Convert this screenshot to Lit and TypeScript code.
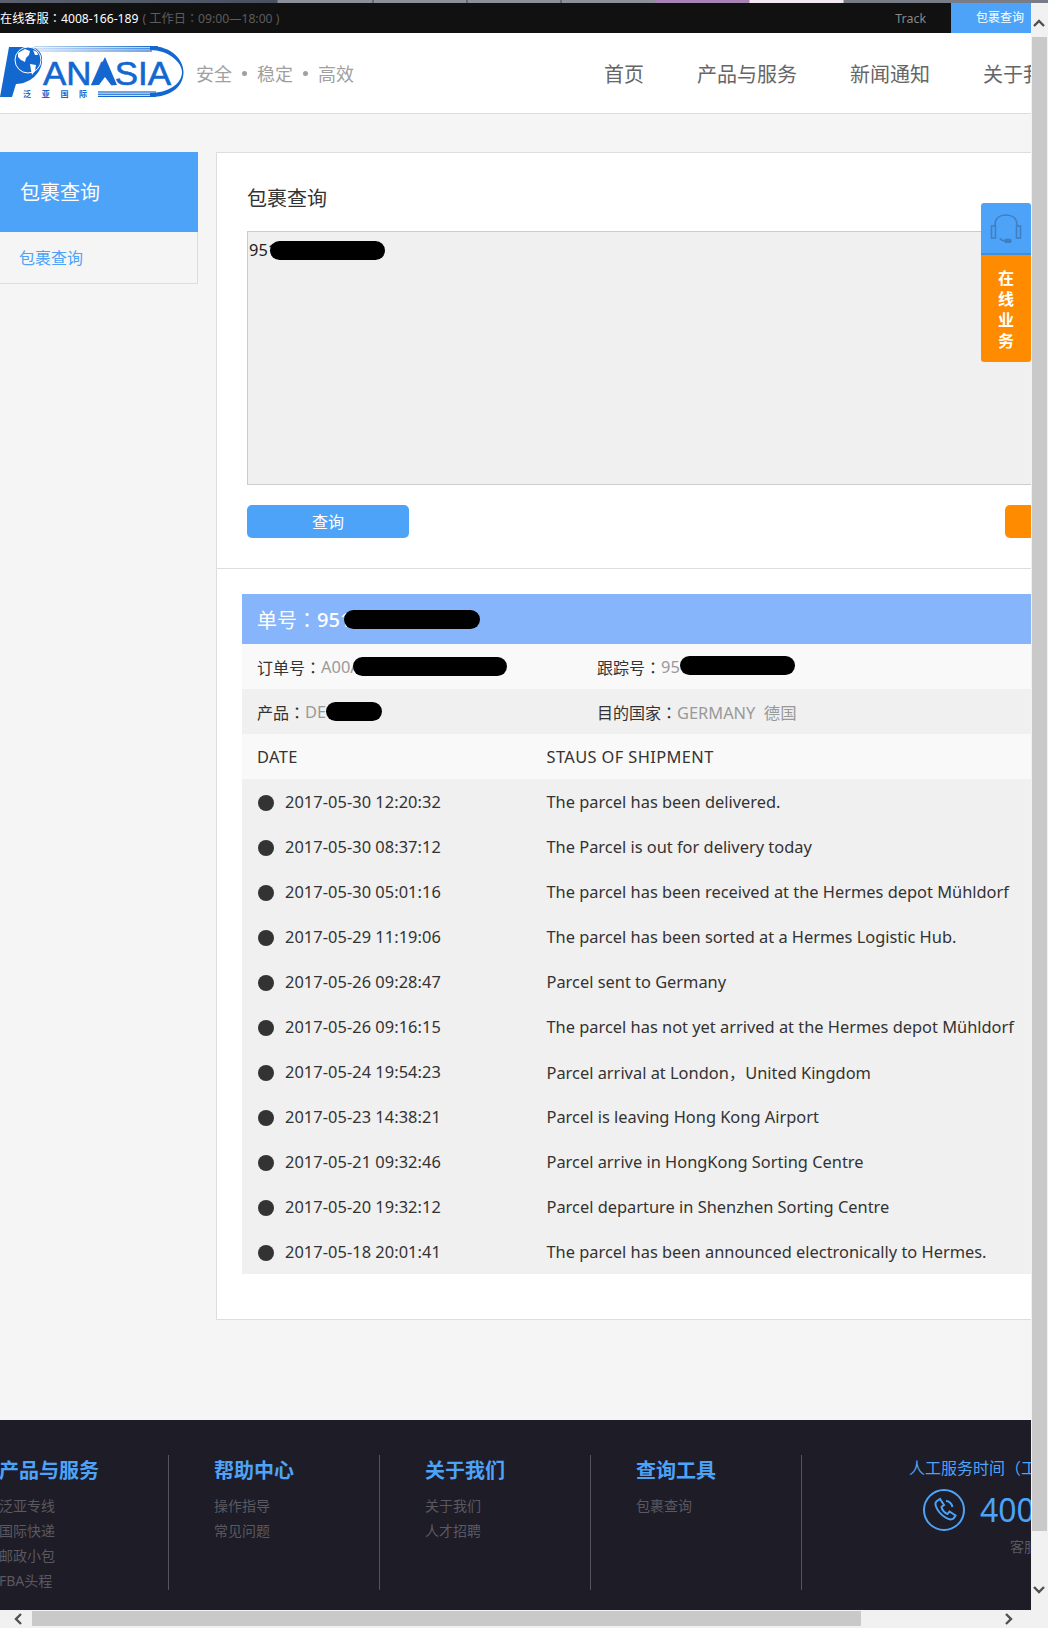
import { LitElement, html, css, svg } from "lit";
import { customElement } from "lit/decorators.js";

const ROWS: [string, string][] = [
  ["2017-05-30 12:20:32", "The parcel has been delivered."],
  ["2017-05-30 08:37:12", "The Parcel is out for delivery today"],
  ["2017-05-30 05:01:16", "The parcel has been received at the Hermes depot Mühldorf"],
  ["2017-05-29 11:19:06", "The parcel has been sorted at a Hermes Logistic Hub."],
  ["2017-05-26 09:28:47", "Parcel sent to Germany"],
  ["2017-05-26 09:16:15", "The parcel has not yet arrived at the Hermes depot Mühldorf"],
  ["2017-05-24 19:54:23", "Parcel arrival at London，United Kingdom"],
  ["2017-05-23 14:38:21", "Parcel is leaving Hong Kong Airport"],
  ["2017-05-21 09:32:46", "Parcel arrive in HongKong Sorting Centre"],
  ["2017-05-20 19:32:12", "Parcel departure in Shenzhen Sorting Centre"],
  ["2017-05-18 20:01:41", "The parcel has been announced electronically to Hermes."],
];

const FOOT: [string, string[]][] = [
  ["产品与服务", ["泛亚专线", "国际快递", "邮政小包", "FBA头程"]],
  ["帮助中心", ["操作指导", "常见问题"]],
  ["关于我们", ["关于我们", "人才招聘"]],
  ["查询工具", ["包裹查询"]],
];

const C = html`<span class="c">：</span>`;

@customElement("app-root")
export class AppRoot extends LitElement {
  static styles = css`
    :host {
      display: block;
      width: 1048px;
      height: 1628px;
      overflow: hidden;
      font-family: "Noto Sans", "Noto Sans CJK SC", sans-serif;
      color: #333;
    }
    .c { font-family: "Noto Sans CJK TC", sans-serif; }
    .chrome {
      height: 3px;
      background: linear-gradient(
        90deg,
        #5a606c 0,
        #4a5262 277px,
        #8d9098 278px,
        #8d9098 372px,
        #444 373px,
        #8d9098 374px,
        #8d9098 466px,
        #444 467px,
        #8d9098 468px,
        #8d9098 560px,
        #444 561px,
        #8d9098 562px,
        #8d9098 655px,
        #a884b4 656px,
        #a884b4 749px,
        #f4e8f2 750px,
        #f4e8f2 843px,
        #777c86 844px,
        #777c86 1048px
      );
    }
    .frame {
      display: grid;
      grid-template-columns: 1031px 17px;
      grid-template-rows: 1607px 18px;
      height: 1625px;
    }
    .view {
      position: relative;
      overflow: hidden;
      background: #f5f5f5;
    }
    .page {
      width: 1400px;
    }
    .topbar {
      height: 30px;
      width: 1031px;
      background: #111;
      display: flex;
      align-items: center;
      font-size: 12.2px;
      white-space: nowrap;
    }
    .tel { color: #fff; }
    .hours { color: #5c5c5c; margin-left: 4px; }
    .track { margin-left: auto; color: #888; margin-right: 25px; font-size: 12.4px; }
    .tbtn {
      width: 80px;
      height: 30px;
      box-sizing: border-box;
      padding-left: 25px;
      line-height: 30px;
      font-size: 12px;
      background: #4da3f8;
      color: #fff;
      overflow: hidden;
    }
    .header {
      height: 80px;
      width: 1031px;
      background: #fff;
      border-bottom: 1px solid #ddd;
      display: flex;
      align-items: center;
      overflow: hidden;
    }
    .logo { flex: none; display: block; }
    .slogan {
      margin-left: 10px;
      font-size: 18px;
      color: #a0a0a0;
      white-space: nowrap;
      font-family: "Noto Sans CJK SC", serif;
      width: 170px;
      flex: none;
      display: flex;
      align-items: center;
      gap: 9px;
    }
    .slogan i {
      width: 5px;
      height: 5px;
      border-radius: 50%;
      background: #a0a0a0;
      margin: 0 1px;
    }
    .nav {
      display: flex;
      gap: 53px;
      margin-left: 238px;
      font-size: 20px;
      color: #666;
      white-space: nowrap;
      flex: none;
    }
    .body {
      display: flex;
      align-items: flex-start;
      padding-top: 38px;
      height: 1306px;
      box-sizing: border-box;
    }
    .side {
      width: 198px;
      flex: none;
      margin-right: 18px;
    }
    .side h2 {
      margin: 0;
      height: 80px;
      line-height: 82px;
      background: #4da3f8;
      color: #fff;
      font-size: 20px;
      font-weight: 400;
      padding-left: 20px;
    }
    .side a {
      display: block;
      height: 52px;
      line-height: 52px;
      box-sizing: border-box;
      padding-left: 19px;
      font-size: 16px;
      color: #4da3f8;
      border-right: 1px solid #ddd;
      border-bottom: 1px solid #ddd;
    }
    .panel {
      width: 1000px;
      flex: none;
      background: #fff;
      border: 1px solid #ddd;
      box-sizing: border-box;
      height: 1168px;
    }
    .query {
      height: 416px;
      border-bottom: 1px solid #ddd;
      padding: 29px 48px 0 30px;
      box-sizing: border-box;
    }
    .query h3 {
      margin: 0 0 16px;
      font-size: 20px;
      font-weight: 400;
      line-height: 33px;
      color: #333;
    }
    .ta {
      height: 254px;
      border: 1px solid #ccc;
      background: #f0f0f0;
      box-sizing: border-box;
      padding: 7px 1px;
      font-size: 16.4px;
      line-height: 22px;
      color: #222;
      display: flex;
      align-items: flex-start;
    }
    .pill {
      display: inline-block;
      background: #000;
      border-radius: 10px;
      height: 19px;
      flex: none;
    }
    .ta .pill { width: 115px; margin-left: -7px; margin-top: 2px; }
    .btns {
      display: flex;
      justify-content: space-between;
      margin-top: 20px;
    }
    .btn {
      height: 33px;
      width: 162px;
      line-height: 35px;
      text-align: center;
      border-radius: 5px;
      background: #4da3f8;
      color: #fff;
      font-size: 16px;
    }
    .btn.orange { background: #ff8c00; }
    .result {
      margin: 25px 0 0 25px;
      width: 960px;
    }
    .rhead {
      height: 50px;
      background: #87b5fb;
      color: #fff;
      font-size: 20px;
      display: flex;
      align-items: center;
      padding-left: 15px;
      white-space: nowrap;
    }
    .rhead .num { font-weight: 500; }
    .rhead .pill { width: 136px; margin-left: -7px; }
    .info {
      display: grid;
      grid-template-columns: 340px 1fr;
      height: 45px;
      align-items: center;
      padding-left: 15px;
      font-size: 16px;
      background: #f9f9f9;
      white-space: nowrap;
    }
    .info.alt { background: #f0f0f0; }
    .info > div { display: flex; align-items: center; }
    .muted { color: #999; font-size: 16.4px; }
    .pill.order { width: 154px; margin-left: -8px; }
    .pill.track-no { width: 115px; margin-top: -2px; }
    .pill.product { width: 56px; }
    .row {
      display: grid;
      grid-template-columns: 289.500px 1fr;
      height: 45px;
      align-items: center;
      padding-left: 15px;
      font-size: 16.4px;
      background: #f0f0f0;
      white-space: nowrap;
    }
    .row.head { background: #f9f9f9; letter-spacing: 0.4px; }
    .date { display: flex; align-items: center; letter-spacing: 0.05px; }
    .dot {
      width: 16px;
      height: 16px;
      border-radius: 50%;
      background: #333;
      margin: 2px 11px 0 1px;
      flex: none;
    }
    .footer {
      height: 190px;
      background: #1d1c27;
      display: flex;
      padding-top: 35px;
      box-sizing: border-box;
      width: 1400px;
    }
    .fcol {
      width: 211px;
      height: 135px;
      box-sizing: border-box;
      border-right: 1px solid #55545c;
      padding-left: 45px;
      flex: none;
    }
    .fcol:first-child { width: 169px; padding-left: 0; }
    .fcol h4 {
      margin: 0 0 6px;
      font-size: 20px;
      font-weight: 700;
      color: #4da3f8;
      line-height: 32px;
    }
    .fcol a {
      display: block;
      font-size: 14px;
      line-height: 25px;
      color: #5a5961;
      white-space: nowrap;
    }
    .fcol:first-child a, .fcol:first-child h4 { margin-left: -1px; }
    .contact { padding-left: 107px; white-space: nowrap; }
    .contact .hours2 { font-size: 16px; color: #4da3f8; line-height: 24px; margin-top: 1px; }
    .tel2 { display: flex; align-items: center; margin: 8px 0 0 13px; gap: 14px; color: #4da3f8; font-size: 32px; line-height: 44px; }
    .kefu { font-size: 14px; color: #5a5961; margin: 4px 0 0 101px; }
    .float {
      position: absolute;
      right: 0;
      top: 200px;
      width: 50px;
      border-radius: 3px;
      overflow: hidden;
    }
    .fb {
      height: 50px;
      background: #4da3f8;
      border-bottom: 2px solid #3f8fdd;
      display: flex;
      align-items: center;
      justify-content: center;
    }
    .fo {
      height: 107px;
      background: #ff8c00;
      color: #fff;
      font-size: 16px;
      font-weight: 700;
      line-height: 21px;
      text-align: center;
      box-sizing: border-box;
      padding-top: 13px;
    }
    .vbar, .hbar { background: #f1f1f1; position: relative; }
    .vbar { grid-row: 1 / span 2; grid-column: 2; }
    .vbar .thumb {
      position: absolute;
      left: 1px;
      width: 15px;
      top: 34px;
      height: 1494px;
      background: #c9c9c9;
    }
    .hbar .thumb {
      position: absolute;
      left: 32px;
      top: 1px;
      height: 15px;
      width: 829px;
      background: #c9c9c9;
    }
    .arrow { position: absolute; display: block; }
  `;

  private arrow(d: string, style: string) {
    return html`<svg class="arrow" style=${style} width="12" height="12" viewBox="0 0 12 12"><path d=${d} fill="none" stroke="#505050" stroke-width="2.4"/></svg>`;
  }

  private logo() {
    return html`<svg class="logo" width="186" height="66" viewBox="0 0 186 66">
      ${svg`
      <defs>
        <linearGradient id="fade" x1="0" x2="1" y1="0" y2="0">
          <stop offset="0" stop-color="#1368d0" stop-opacity="0.25"/>
          <stop offset="1" stop-color="#1368d0"/>
        </linearGradient>
      </defs>
      <rect x="34" y="6" width="124" height="1.300" fill="url(#fade)"/>
      <rect x="34" y="8.200" width="124" height="1.300" fill="url(#fade)"/>
      <rect x="34" y="10.400" width="118" height="1.200" fill="url(#fade)"/>
      <path d="M150 6C172 6 183.500 20 183.500 32C183.500 46 172 57 150 57L150 53C168 53 182 44 182 32C182 22 168 10 150 10Z" fill="#1368d0"/>
      <rect x="98" y="51.400" width="58" height="1.200" fill="#1368d0"/>
      <rect x="98" y="53.600" width="58" height="1.200" fill="#1368d0"/>
      <rect x="98" y="55.800" width="58" height="1.200" fill="#1368d0"/>
      <path d="M9 7H28C38 7 43 13 42 22C41 33 30 44 16 44L12 57H0Z" fill="#1368d0"/>
      <circle cx="28" cy="20" r="13" fill="#1368d0" stroke="#fff" stroke-width="1"/>
      <path d="M18 13l7-4 5 2-1 4-3 3-1 4-4-2-3-3zM30 24l6 1-1 6-3 4-1-5zM33 10l4 2 1 3-3 0z" fill="#fff"/>
      <text x="43" y="45" font-family="'Liberation Sans',sans-serif" font-size="33" fill="#1368d0" stroke="#1368d0" stroke-width="0.6" textLength="128" lengthAdjust="spacingAndGlyphs">ANASIA</text>
      <path d="M105 17L117 45H91Z" fill="#1368d0"/>
      <path d="M99 45L105 37L111 45Z" fill="#fff"/>
      <text x="23" y="57" font-family="'Noto Sans CJK SC',sans-serif" font-size="8" font-weight="700" fill="#1368d0" letter-spacing="10.700">泛亚国际</text>
      `}
    </svg>`;
  }

  private headset() {
    return html`<svg width="32" height="30" viewBox="0 0 32 30" fill="none" stroke="#3f7fc2" stroke-width="1.600">
      <path d="M5 14V12C5 5 10 2 16 2s11 3 11 10v2"/>
      <rect x="1.500" y="13" width="4" height="12"/>
      <rect x="26.500" y="13" width="4" height="12"/>
      <path d="M10 25c1 3 4 3 6 3"/>
      <ellipse cx="18" cy="28" rx="3" ry="1.600" fill="#3f7fc2"/>
    </svg>`;
  }

  private phone() {
    return html`<svg width="44" height="44" viewBox="0 0 44 44" fill="none" stroke="#4da3f8" stroke-width="2">
      <circle cx="22" cy="22" r="20"/>
      <path d="M15 13l3-2 4 6-2.500 2c.5 3 3.500 6.500 6 7l2-2.500 6 4-2 3c-2 1.500-5 1-8-1-4-2.500-8-7-9.500-11-1-2.500-1-4 1-5.500z"/>
      <path d="M24 13c3 0 6 2.500 6.500 6"/>
    </svg>`;
  }

  render() {
    return html`
      <div class="chrome"></div>
      <div class="frame">
        <div class="view">
          <div class="page">
            <div class="topbar">
              <span class="tel">在线客服${C}4008-166-189</span>
              <span class="hours">( 工作日${C}09:00—18:00 )</span>
              <span class="track">Track</span>
              <span class="tbtn">包裹查询</span>
            </div>
            <div class="header">
              ${this.logo()}
              <div class="slogan">
                <span>安全</span><i></i><span>稳定</span><i></i><span>高效</span>
              </div>
              <div class="nav">
                <span>首页</span><span>产品与服务</span><span>新闻通知</span><span>关于我们</span>
              </div>
            </div>
            <div class="body">
              <div class="side">
                <h2>包裹查询</h2>
                <a>包裹查询</a>
              </div>
              <div class="panel">
                <div class="query">
                  <h3>包裹查询</h3>
                  <div class="ta">951<span class="pill"></span></div>
                  <div class="btns">
                    <div class="btn">查询</div>
                    <div class="btn orange"></div>
                  </div>
                </div>
                <div class="result">
                  <div class="rhead">单号${C}<span class="num">951</span><span class="pill"></span></div>
                  <div class="info">
                    <div>订单号${C}<span class="muted">A00A</span><span class="pill order"></span></div>
                    <div>跟踪号${C}<span class="muted">95</span><span class="pill track-no"></span></div>
                  </div>
                  <div class="info alt">
                    <div>产品${C}<span class="muted">DE</span><span class="pill product"></span></div>
                    <div>目的国家${C}<span class="muted">GERMANY&nbsp;&nbsp;德国</span></div>
                  </div>
                  <div class="row head"><span>DATE</span><span>STAUS OF SHIPMENT</span></div>
                  ${ROWS.map(
                    ([d, s]) => html`<div class="row">
                      <span class="date"><i class="dot"></i>${d}</span><span>${s}</span>
                    </div>`
                  )}
                </div>
              </div>
            </div>
            <div class="footer">
              ${FOOT.map(
                ([t, items]) => html`<div class="fcol">
                  <h4>${t}</h4>
                  ${items.map((i) => html`<a>${i}</a>`)}
                </div>`
              )}
              <div class="contact">
                <div class="hours2">人工服务时间（工作日）</div>
                <div class="tel2">${this.phone()}<span>4008-166-189</span></div>
                <div class="kefu">客服热线</div>
              </div>
            </div>
          </div>
          <div class="float">
            <div class="fb">${this.headset()}</div>
            <div class="fo">在<br />线<br />业<br />务</div>
          </div>
        </div>
        <div class="vbar">
          ${this.arrow("M1 8L6 3L11 8", "left:2px;top:15px")}
          <div class="thumb"></div>
          ${this.arrow("M1 4L6 9L11 4", "left:2px;top:1580px")}
        </div>
        <div class="hbar">
          ${this.arrow("M8 1L3 6L8 11", "left:13px;top:3px")}
          <div class="thumb"></div>
          ${this.arrow("M4 1L9 6L4 11", "left:1002px;top:3px")}
        </div>
      </div>
    `;
  }
}
